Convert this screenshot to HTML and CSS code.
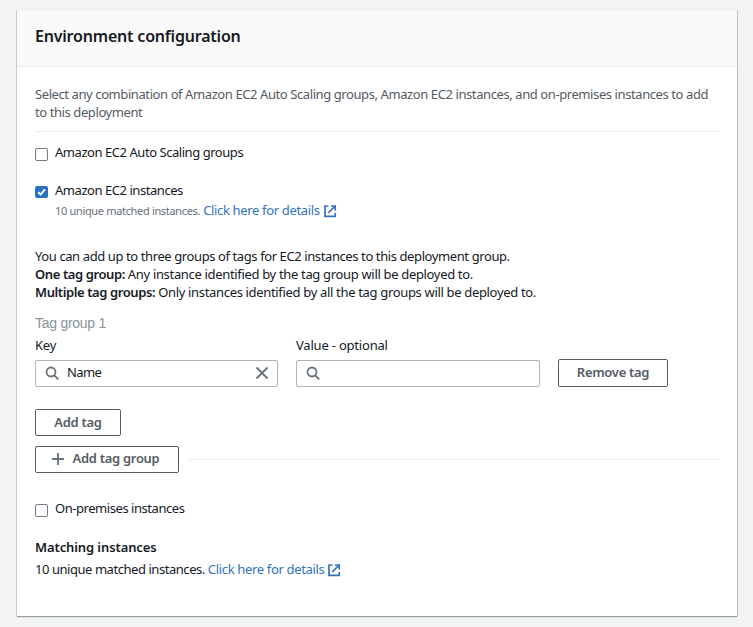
FILE: index.html
```
<!DOCTYPE html>
<html lang="en">
<head>
<meta charset="utf-8">
<title>Environment configuration</title>
<link rel="stylesheet" href="styles.css">
</head>
<body>
<svg class="defs" width="0" height="0" aria-hidden="true">
  <symbol id="external" viewBox="0 0 14 14"><path d="M5.5 2H2v10.3h10.2V9M8 2h4.2v4.5M12.2 2 5.3 8.9"/></symbol>
  <symbol id="search" viewBox="0 0 14 14"><circle cx="6" cy="6" r="4.5"/><path d="m9.3 9.3 4 4"/></symbol>
</svg>
<main class="card">
  <header class="card-header"><h1>Environment configuration</h1></header>
  <div class="card-body">
    <p class="intro">Select any combination of Amazon EC2 Auto Scaling groups, Amazon EC2 instances, and on-premises instances to add to this deployment</p>
    <label class="option"><span class="box"></span><span class="option-text">Amazon EC2 Auto Scaling groups</span></label>
    <label class="option option-ec2"><span class="box checked"><svg viewBox="0 0 13 13"><path d="m3 6.7 2.5 2.6 4.7-5.6"/></svg></span><span class="option-text">Amazon EC2 instances</span></label>
    <div class="match-row indent"><small>10 unique matched instances.</small><a>Click here for details<svg class="ext"><use href="#external"/></svg></a></div>
    <div class="notes">
      <p>You can add up to three groups of tags for EC2 instances to this deployment group.</p>
      <p><b>One tag group:</b> <span class="explain">Any instance identified by the tag group will be deployed to.</span></p>
      <p><b>Multiple tag groups:</b> <span class="explain">Only instances identified by all the tag groups will be deployed to.</span></p>
    </div>
    <h2 class="group-name">Tag group 1</h2>
    <div class="tag-grid">
      <div class="field"><span class="label">Key</span>
        <div class="input"><svg class="ico"><use href="#search"/></svg><span class="value">Name</span><svg class="ico clear" viewBox="0 0 14 14"><path d="m1.5 1.5 11 11M12.5 1.5l-11 11"/></svg></div></div>
      <div class="field"><span class="label">Value - optional</span>
        <div class="input"><svg class="ico"><use href="#search"/></svg></div></div>
      <button class="btn remove">Remove tag</button>
    </div>
    <button class="btn add">Add tag</button>
    <div class="group-row"><button class="btn add-group"><svg class="ico" viewBox="0 0 14 14"><path d="M7 1v12M1 7h12"/></svg>Add tag group</button><div class="rule"></div></div>
    <label class="option option-prem"><span class="box"></span><span class="option-text">On-premises instances</span></label>
    <h3>Matching instances</h3>
    <div class="match-row"><span class="summary">10 unique matched instances.</span><a>Click here for details<svg class="ext"><use href="#external"/></svg></a></div>
  </div>
</main>
</body>
</html>
```
FILE: styles.css
```
* { box-sizing: border-box; }
body { margin: 0; padding: 10px 16px 0 17px; height: 627px; overflow: hidden; background: #f2f3f3; color: #16191f; font: 13px/18px "Noto Sans", "Open Sans", sans-serif; letter-spacing: -.4px; }
h1, h2, h3, p { margin: 0; }
svg { fill: none; stroke: currentColor; flex: none; }
.defs { position: absolute; }
span, b, a { white-space: nowrap; }
.card { width: 720px; height: 606px; background: #fff; box-shadow: 0 1px 1px #687078aa, 1px 0 0 #c8cccd, -1px 0 0 #d5dada, 0 -1px 0 #eaeded; }
.card-header { height: 57px; padding: 15px 18px; background: #fafafa; border-bottom: 1px solid #eaeded; }
h1 { font-size: 16px; line-height: 22px; font-weight: 600; letter-spacing: -.2px; }
.card-body { padding: 18px 18px 0; }
.intro { height: 47px; border-bottom: 1px solid #eaeded; color: #545b64; letter-spacing: -.41px; }
.option { display: flex; align-items: center; height: 18px; margin-top: 12px; }
.option-text { margin-top: -2px; letter-spacing: -.45px; }
.box { width: 13px; height: 13px; margin: 3px 7px 0 0; border: 1px solid #747b86; border-radius: 2px; background: #fff; flex: none; }
.box.checked { height: 12px; margin-top: 2px; background: #2974bd; border: 0; }
.box svg { display: block; width: 13px; height: 12px; stroke: #fff; stroke-width: 2; }
.option-ec2 { margin-top: 20px; }
.match-row { display: flex; align-items: center; height: 18px; margin-top: 4px; }
.match-row > :first-child { margin-right: 3px; }
.summary { letter-spacing: -.45px; }
.indent { margin: 1px 0 0 20px; }
small { margin-top: 2px; font-size: 11px; color: #687078; letter-spacing: -.33px; }
a { display: flex; align-items: center; color: #3572bd; letter-spacing: -.34px; }
.ext { width: 14px; height: 14px; margin: 2px 0 0 3px; stroke-width: 1.7; }
.notes { margin-top: 28px; }
.explain { letter-spacing: -.33px; }
b, h3 { font-weight: 600; }
.group-name { margin-top: 12px; font: 14px/20px "Liberation Sans", Arial, sans-serif; color: #879596; letter-spacing: -.27px; }
.tag-grid { display: grid; grid-template-columns: 243px 244px 110px; column-gap: 18px; align-items: end; margin-top: 3px; }
.label { display: block; height: 24px; letter-spacing: -.2px; }
.input { display: flex; align-items: center; height: 27px; padding: 0 8px 1px 9px; border: 1px solid #aab7b8; border-radius: 2px; }
.ico { width: 14px; height: 14px; color: #687078; stroke-width: 1.8; }
.value { flex: 1; margin-left: 8px; margin-top: -2px; letter-spacing: -.6px; }
.btn { display: flex; align-items: center; justify-content: center; height: 27px; padding: 0 0 2px; border: 1px solid #545b64; border-radius: 2px; background: #fff; color: #545b64; font: 600 13px/18px "Noto Sans", sans-serif; letter-spacing: -.3px; }
.remove { height: 28px; }
.add { width: 86px; margin-top: 22px; }
.group-row { display: flex; align-items: center; margin-top: 10px; gap: 9px; }
.add-group { width: 144px; gap: 8px; padding: 0 4px 3px 0; }
.add-group .ico { margin-top: 2px; }
.rule { flex: 1; height: 1px; background: #eaeded; }
.option-prem { margin-top: 27px; }
h3 { margin-top: 20px; font-size: 13px; line-height: 18px; letter-spacing: -.1px; }
```
